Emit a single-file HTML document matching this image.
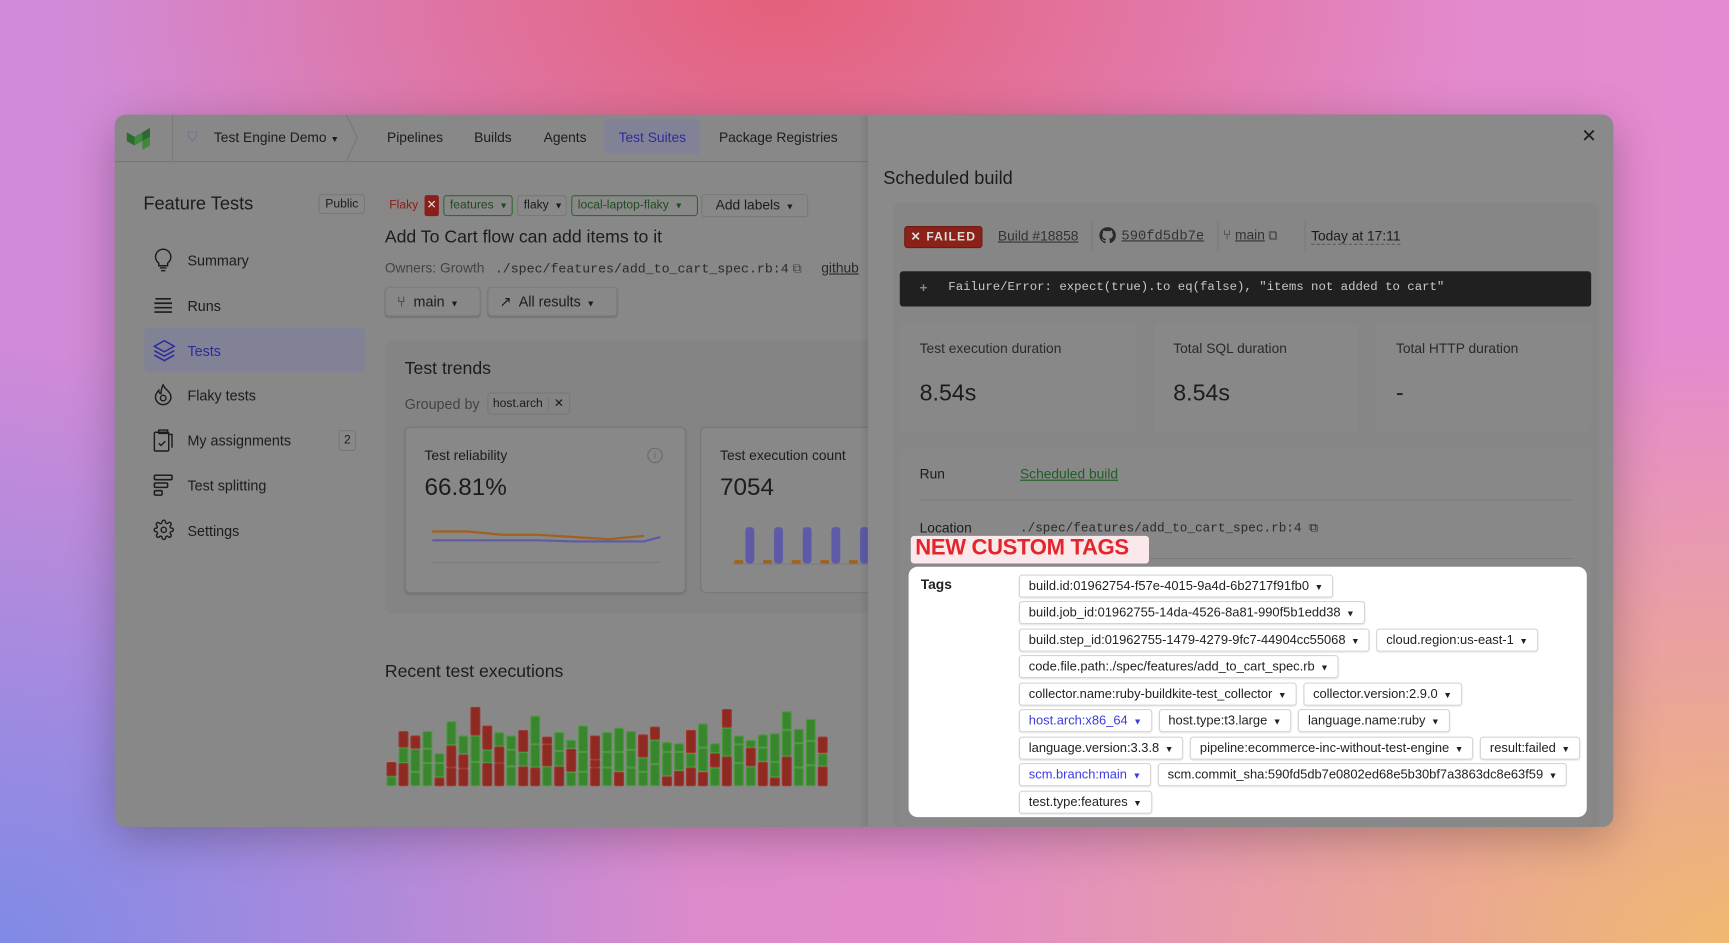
<!DOCTYPE html>
<html><head><meta charset="utf-8">
<style>
*{box-sizing:border-box;margin:0;padding:0}
html,body{width:1729px;height:943px;overflow:hidden}
body{font-family:"Liberation Sans",sans-serif;color:#1c1c1c;
background:
radial-gradient(ellipse 700px 420px at 780px 0px,#e4607a 0%,rgba(228,96,122,0) 100%),
radial-gradient(ellipse 800px 600px at 1729px 943px,#f0b870 0%,rgba(240,184,112,0) 100%),
radial-gradient(ellipse 700px 600px at 0px 943px,#7f8ae6 0%,rgba(127,138,230,0) 100%),
linear-gradient(90deg,#d08ad8 0%,#e08ac8 50%,#e48ad0 100%);}
#s{position:absolute;left:0;top:0;width:1568px;height:855px;transform:scale(1.10268);transform-origin:0 0}
.a{position:absolute;white-space:nowrap}
#win{position:absolute;left:104px;top:104px;width:1359px;height:646px;border-radius:10px;background:#888;overflow:hidden;box-shadow:0 10px 40px rgba(0,0,0,.25)}
.nav{font-size:12.5px;color:#1c1c1c}
.side{font-size:13px;color:#1c1c1c}
.chip{position:absolute;height:19px;border:1px solid #787878;border-radius:3px;font-size:11px;line-height:17px;padding:0 5px;white-space:nowrap}
.btn{position:absolute;height:27px;border:1px solid #7a7a7a;border-radius:4px;font-size:13px;line-height:25px;padding:0 10px;box-shadow:0 1px 1px rgba(0,0,0,.15);white-space:nowrap}
.tag{display:inline-block;height:21px;border:1px solid #d4d4d4;border-radius:3px;font-size:11.7px;line-height:19px;padding:0 8px;margin-right:6px;box-shadow:0 1px 1px rgba(0,0,0,.08);color:#222;white-space:nowrap}
.tag.b{color:#3b3be0}
.row{position:absolute;left:100px;white-space:nowrap;height:21px}
.car{font-size:8px;margin-left:5px}
</style></head><body>
<div id="s">
<div id="win">
 <div style="position:absolute;left:0;top:42px;width:683px;height:1px;background:#777"></div>
 <svg class="a" style="left:10px;top:12px" width="28" height="20" viewBox="0 0 28 20"><path d="M1 4 L8 8 L8 16 L1 12Z" fill="#2e6a30"/><path d="M8 8 L15 4 L15 12 L8 16Z" fill="#3d8a3f"/><path d="M15 4 L22 0 L22 8 L15 12Z" fill="#2e6a30"/><path d="M15 12 L22 8 L22 16 L15 20Z" fill="#3d8a3f"/></svg>
 <div class="a" style="left:52px;top:0;width:1px;height:42px;background:#7a7a7a"></div>
 <div class="a nav" style="left:66px;top:13px;color:#6a6a90;font-size:12px">⛉</div>
 <div class="a nav" style="left:90px;top:14px">Test Engine Demo <span style="font-size:8px">▼</span></div>
 <svg class="a" style="left:208px;top:0" width="14" height="42"><path d="M2 0 L12 21 L2 42" stroke="#777" fill="none"/></svg>
 <div class="a nav" style="left:247px;top:14px">Pipelines</div>
 <div class="a nav" style="left:326px;top:14px">Builds</div>
 <div class="a nav" style="left:389px;top:14px">Agents</div>
 <div class="a" style="left:444px;top:4px;width:87px;height:32px;background:#828296;border-radius:4px"></div>
 <div class="a nav" style="left:457px;top:14px;color:#2c2c9a">Test Suites</div>
 <div class="a nav" style="left:548px;top:14px">Package Registries</div>

 <div class="a" style="left:26px;top:72px;font-size:16.5px">Feature Tests</div>
 <div class="a" style="left:185px;top:72px;height:18px;border:1px solid #777;border-radius:3px;font-size:11px;line-height:16px;padding:0 5px">Public</div>
 <svg class="a" style="left:35px;top:121px" width="18" height="22" viewBox="0 0 18 22" fill="none" stroke="#1c1c1c" stroke-width="1.3"><path d="M9 1a7 7 0 0 0-4 12.7V16h8v-2.3A7 7 0 0 0 9 1z"/><path d="M6 18h6M7 20.5h4"/></svg>
 <div class="a side" style="left:66px;top:125px">Summary</div>
 <svg class="a" style="left:35px;top:165px" width="18" height="16" fill="none" stroke="#1c1c1c" stroke-width="1.5"><path d="M2 2h14M1 6h16M1 10h16M1 14h16"/></svg>
 <div class="a side" style="left:66px;top:166px">Runs</div>
 <div class="a" style="left:27px;top:193px;width:200px;height:41px;background:#828296;border-radius:4px"></div>
 <svg class="a" style="left:35px;top:204px" width="20" height="20" viewBox="0 0 20 20" fill="none" stroke="#2c2c9a" stroke-width="1.4"><path d="M10 1 L19 6 L10 11 L1 6Z"/><path d="M1 10 L10 15 L19 10"/><path d="M1 14 L10 19 L19 14"/></svg>
 <div class="a side" style="left:66px;top:207px;color:#2c2c9a">Tests</div>
 <svg class="a" style="left:35px;top:244px" width="18" height="20" fill="none" stroke="#1c1c1c" stroke-width="1.3"><path d="M9 1c1 4 7 6 7 11a7 7 0 0 1-14 0c0-3 2-5 3-6 0 2 1 3 2 3 0-3 1-6 2-8z"/><circle cx="9" cy="13" r="2.5"/></svg>
 <div class="a side" style="left:66px;top:247px">Flaky tests</div>
 <svg class="a" style="left:35px;top:284px" width="18" height="22" fill="none" stroke="#1c1c1c" stroke-width="1.3"><rect x="1" y="4" width="13" height="17" rx="1"/><path d="M5 2h8v3H5zM14 6h3v12"/><path d="M5 14l2 2 4-4"/></svg>
 <div class="a side" style="left:66px;top:288px">My assignments</div>
 <div class="a" style="left:203px;top:286px;width:16px;height:19px;border:1px solid #777;border-radius:3px;font-size:11px;text-align:center;line-height:17px">2</div>
 <svg class="a" style="left:35px;top:326px" width="18" height="20" fill="none" stroke="#1c1c1c" stroke-width="1.4"><rect x="1" y="1" width="16" height="4" rx="1"/><rect x="1" y="8" width="12" height="4" rx="1"/><rect x="1" y="15" width="7" height="4" rx="1"/></svg>
 <div class="a side" style="left:66px;top:329px">Test splitting</div>
 <svg class="a" style="left:35px;top:367px" width="19" height="19" viewBox="0 0 24 24" fill="none" stroke="#1c1c1c" stroke-width="1.6"><circle cx="12" cy="12" r="3"/><path d="M19.4 15a1.6 1.6 0 0 0 .3 1.8l.1.1a2 2 0 1 1-2.8 2.8l-.1-.1a1.6 1.6 0 0 0-1.8-.3 1.6 1.6 0 0 0-1 1.5V21a2 2 0 1 1-4 0v-.1a1.6 1.6 0 0 0-1-1.5 1.6 1.6 0 0 0-1.8.3l-.1.1a2 2 0 1 1-2.8-2.8l.1-.1a1.6 1.6 0 0 0 .3-1.8 1.6 1.6 0 0 0-1.5-1H3a2 2 0 1 1 0-4h.1a1.6 1.6 0 0 0 1.5-1 1.6 1.6 0 0 0-.3-1.8l-.1-.1a2 2 0 1 1 2.8-2.8l.1.1a1.6 1.6 0 0 0 1.8.3H9a1.6 1.6 0 0 0 1-1.5V3a2 2 0 1 1 4 0v.1a1.6 1.6 0 0 0 1 1.5 1.6 1.6 0 0 0 1.8-.3l.1-.1a2 2 0 1 1 2.8 2.8l-.1.1a1.6 1.6 0 0 0-.3 1.8V9a1.6 1.6 0 0 0 1.5 1H21a2 2 0 1 1 0 4h-.1a1.6 1.6 0 0 0-1.5 1z"/></svg>
 <div class="a side" style="left:66px;top:370px">Settings</div>

 <div class="chip" style="left:244px;top:73px;border-color:transparent;background:#8a8686;color:#8a1f1a;padding:0 4px">Flaky</div>
 <div class="a" style="left:281px;top:73px;width:13px;height:19px;background:#8a1f1a;color:#ddd;font-size:11px;text-align:center;line-height:19px;border-radius:2px">✕</div>
 <div class="chip" style="left:298px;top:73px;width:63px;border-color:#2e6a30;color:#1d4d20">features<span class="car">▼</span></div>
 <div class="chip" style="left:365px;top:73px;width:45px">flaky<span class="car">▼</span></div>
 <div class="chip" style="left:414px;top:73px;width:115px;border-color:#2e6a30;color:#1d4d20">local-laptop-flaky<span class="car">▼</span></div>
 <div class="chip" style="left:532px;top:72px;width:97px;height:21px;font-size:12.5px;line-height:19px;padding:0 12px;color:#1c1c1c">Add labels<span class="car">▼</span></div>
 <div class="a" style="left:245px;top:103px;font-size:16px">Add To Cart flow can add items to it</div>
 <div class="a" style="left:245px;top:132px;font-size:12.5px;color:#444">Owners: Growth <span style="font-family:'Liberation Mono',monospace;font-size:12px;margin-left:6px;color:#2a2a2a">./spec/features/add_to_cart_spec.rb:4</span> <span style="font-size:12px">⧉</span> <span style="margin-left:14px;text-decoration:underline;color:#2a2a2a">github</span></div>
 <div class="btn" style="left:245px;top:156px;width:87px">⑂&nbsp; main<span class="car">▼</span></div>
 <div class="btn" style="left:338px;top:156px;width:118px">↗&nbsp; All results<span class="car">▼</span></div>

 <div class="a" style="left:245px;top:205px;width:460px;height:247px;background:#848484;border-radius:6px"></div>
 <div class="a" style="left:263px;top:222px;font-size:16px">Test trends</div>
 <div class="a" style="left:263px;top:255px;font-size:13px;color:#444">Grouped by</div>
 <div class="a" style="left:338px;top:252px;height:20px;border:1px solid #777;border-radius:3px;font-size:11px;line-height:18px;padding:0 4px">host.arch <span style="border-left:1px solid #777;padding-left:4px;margin-left:2px">✕</span></div>
 <div class="a" style="left:263px;top:283px;width:255px;height:151px;border:1px solid #777;border-radius:5px;background:#888;box-shadow:0 1px 2px rgba(0,0,0,.15)"></div>
 <div class="a" style="left:281px;top:302px;font-size:12.5px">Test reliability</div>
 <div class="a" style="left:483px;top:302px;width:14px;height:14px;border:1px solid #6a6a6a;border-radius:50%;font-size:9px;text-align:center;line-height:12px;color:#6a6a6a">i</div>
 <div class="a" style="left:281px;top:325px;font-size:22px">66.81%</div>
 <svg class="a" style="left:285px;top:372px" width="210" height="40"><polyline points="3,6 35,6 67,9 99,9 131,11 163,13 195,10" stroke="#a0621a" stroke-width="2" fill="none"/><polyline points="3,14 35,14 67,14 99,14 131,15 163,15 195,15 210,11" stroke="#5e5aa8" stroke-width="2" fill="none"/><line x1="3" y1="34" x2="210" y2="34" stroke="#7b7b7b"/></svg>
 <div class="a" style="left:531px;top:283px;width:200px;height:151px;border:1px solid #777;border-radius:5px;background:#888"></div>
 <div class="a" style="left:549px;top:302px;font-size:12.5px">Test execution count</div>
 <div class="a" style="left:549px;top:325px;font-size:22px">7054</div>
 <svg class="a" style="left:560px;top:370px" width="130" height="40"><g fill="#5e5aa8"><rect x="12" y="4" width="8" height="33" rx="3"/><rect x="38" y="4" width="8" height="33" rx="3"/><rect x="64" y="4" width="8" height="33" rx="3"/><rect x="90" y="4" width="8" height="33" rx="3"/><rect x="116" y="4" width="8" height="33" rx="3"/></g><g fill="#a0621a"><rect x="2" y="34" width="8" height="3"/><rect x="28" y="34" width="8" height="3"/><rect x="54" y="34" width="8" height="3"/><rect x="80" y="34" width="8" height="3"/><rect x="106" y="34" width="8" height="3"/></g><line x1="0" y1="37.5" x2="130" y2="37.5" stroke="#7b7b7b"/></svg>

 <div class="a" style="left:245px;top:497px;font-size:16px">Recent test executions</div>
 <svg id="bars" class="a" style="left:246px;top:530px" width="410" height="80"></svg>

 <div class="a" style="left:683px;top:0;width:676px;height:646px;background:#8a8a8a;box-shadow:-2px 0 6px rgba(0,0,0,.12)"></div>
 <div class="a" style="left:1330px;top:10px;font-size:17px">✕</div>
 <div class="a" style="left:697px;top:49px;font-size:16.5px">Scheduled build</div>
 <div class="a" style="left:706px;top:80px;width:640px;height:566px;background:#868686;border-radius:6px"></div>
 <div class="a" style="left:716px;top:101px;width:71px;height:20px;background:#8a2219;border:1px solid #6e1a12;border-radius:3px;color:#ddd;font-size:11px;font-weight:bold;letter-spacing:1px;line-height:18px;text-align:center">✕ FAILED</div>
 <div class="a" style="left:801px;top:103px;font-size:12.5px;text-decoration:underline;color:#333">Build #18858</div>
 <div class="a" style="left:886px;top:97px;width:1px;height:26px;background:#7a7a7a"></div>
 <svg class="a" style="left:893px;top:102px" width="15" height="15" viewBox="0 0 16 16"><path fill="#2a2a2a" d="M8 0C3.6 0 0 3.6 0 8c0 3.5 2.3 6.5 5.5 7.6.4.1.5-.2.5-.4v-1.5c-2.2.5-2.7-1-2.7-1-.4-.9-.9-1.2-.9-1.2-.7-.5.1-.5.1-.5.8.1 1.2.8 1.2.8.7 1.3 1.9.9 2.3.7.1-.5.3-.9.5-1.1-1.8-.2-3.6-.9-3.6-4 0-.9.3-1.6.8-2.1-.1-.2-.4-1 .1-2.1 0 0 .7-.2 2.2.8.6-.2 1.3-.3 2-.3s1.4.1 2 .3c1.5-1 2.2-.8 2.2-.8.4 1.1.2 1.9.1 2.1.5.6.8 1.3.8 2.1 0 3.1-1.9 3.700-3.6 3.9.3.3.5.8.5 1.5v2.2c0 .2.1.5.6.4C13.7 14.5 16 11.5 16 8c0-4.4-3.6-8-8-8z"/></svg>
 <div class="a" style="left:913px;top:103px;font-size:12.5px;font-family:'Liberation Mono',monospace;text-decoration:underline;color:#333">590fd5db7e</div>
 <div class="a" style="left:1000px;top:97px;width:1px;height:26px;background:#7a7a7a"></div>
 <div class="a" style="left:1005px;top:102px;font-size:12.5px;color:#333">⑂ <span style="text-decoration:underline">main</span> ⧉</div>
 <div class="a" style="left:1079px;top:97px;width:1px;height:26px;background:#7a7a7a"></div>
 <div class="a" style="left:1085px;top:103px;font-size:12.5px;border-bottom:1px dashed #555">Today at 17:11</div>
 <div class="a" style="left:712px;top:142px;width:627px;height:32px;background:#202020;border-radius:3px"></div>
 <div class="a" style="left:730px;top:150px;font-size:12px;color:#888;font-weight:bold">+</div>
 <div class="a" style="left:756px;top:151px;font-size:11.2px;font-family:'Liberation Mono',monospace;color:#c8c8c8">Failure/Error: expect(true).to eq(false), "items not added to cart"</div>
 <div class="a" style="left:712px;top:189px;width:215px;height:99px;background:#888;border-radius:4px"></div>
 <div class="a" style="left:942px;top:189px;width:186px;height:99px;background:#888;border-radius:4px"></div>
 <div class="a" style="left:1144px;top:189px;width:195px;height:99px;background:#888;border-radius:4px"></div>
 <div class="a" style="left:730px;top:205px;font-size:12.5px;color:#2a2a2a">Test execution duration</div>
 <div class="a" style="left:960px;top:205px;font-size:12.5px;color:#2a2a2a">Total SQL duration</div>
 <div class="a" style="left:1162px;top:205px;font-size:12.5px;color:#2a2a2a">Total HTTP duration</div>
 <div class="a" style="left:730px;top:241px;font-size:21px">8.54s</div>
 <div class="a" style="left:960px;top:241px;font-size:21px">8.54s</div>
 <div class="a" style="left:1162px;top:241px;font-size:21px">-</div>
 <div class="a" style="left:712px;top:303px;width:627px;height:343px;background:#888;border-radius:4px"></div>
 <div class="a" style="left:730px;top:319px;font-size:12.5px">Run</div>
 <div class="a" style="left:821px;top:319px;font-size:12.5px;color:#1e5e22;text-decoration:underline">Scheduled build</div>
 <div class="a" style="left:730px;top:349px;width:592px;height:1px;background:#7a7a7a"></div>
 <div class="a" style="left:730px;top:368px;font-size:12.5px">Location</div>
 <div class="a" style="left:821px;top:369px;font-size:11.5px;font-family:'Liberation Mono',monospace;color:#2a2a2a">./spec/features/add_to_cart_spec.rb:4 ⧉</div>
 <div class="a" style="left:730px;top:402px;width:592px;height:1px;background:#7a7a7a"></div>

 <div class="a" style="left:722px;top:382px;width:216px;height:25px;background:#fbe8ea;border-radius:3px"></div>
 <div class="a" style="left:726px;top:382px;font-size:20px;color:#e3262c;font-weight:bold;letter-spacing:-.3px">NEW CUSTOM TAGS</div>
 <div class="a" style="left:720px;top:410px;width:615px;height:227px;background:#fff;border-radius:8px">
  <div class="a" style="left:11px;top:9px;font-size:12.5px;font-weight:bold;color:#222">Tags</div>
  <div class="row" style="top:7px"><span class="tag">build.id:01962754-f57e-4015-9a4d-6b2717f91fb0<span class="car">▼</span></span></div>
  <div class="row" style="top:31px"><span class="tag">build.job_id:01962755-14da-4526-8a81-990f5b1edd38<span class="car">▼</span></span></div>
  <div class="row" style="top:56px"><span class="tag">build.step_id:01962755-1479-4279-9fc7-44904cc55068<span class="car">▼</span></span><span class="tag">cloud.region:us-east-1<span class="car">▼</span></span></div>
  <div class="row" style="top:80px"><span class="tag">code.file.path:./spec/features/add_to_cart_spec.rb<span class="car">▼</span></span></div>
  <div class="row" style="top:105px"><span class="tag">collector.name:ruby-buildkite-test_collector<span class="car">▼</span></span><span class="tag">collector.version:2.9.0<span class="car">▼</span></span></div>
  <div class="row" style="top:129px"><span class="tag b">host.arch:x86_64<span class="car">▼</span></span><span class="tag">host.type:t3.large<span class="car">▼</span></span><span class="tag">language.name:ruby<span class="car">▼</span></span></div>
  <div class="row" style="top:154px"><span class="tag">language.version:3.3.8<span class="car">▼</span></span><span class="tag">pipeline:ecommerce-inc-without-test-engine<span class="car">▼</span></span><span class="tag">result:failed<span class="car">▼</span></span></div>
  <div class="row" style="top:178px"><span class="tag b">scm.branch:main<span class="car">▼</span></span><span class="tag">scm.commit_sha:590fd5db7e0802ed68e5b30bf7a3863dc8e63f59<span class="car">▼</span></span></div>
  <div class="row" style="top:203px"><span class="tag">test.type:features<span class="car">▼</span></span></div>
 </div>
</div>
</div>
<script>
var cols=[[9,'g',13,'r'],[21,'r',14,'g',15,'r'],[13,'g',21,'g',12,'r'],[21,'g',13,'g',16,'g'],[8,'r',13,'g',9,'g'],[17,'r',20,'r',22,'g'],[16,'r',13,'r',17,'g'],[22,'g',24,'g',26,'r'],[21,'r',12,'g',22,'r'],[21,'r',15,'r',13,'g'],[18,'g',15,'g',13,'g'],[18,'r',13,'g',20,'r'],[17,'r',21,'g',26,'g'],[18,'g',20,'r',7,'r'],[18,'r',14,'g',17,'g'],[13,'g',21,'r',8,'g'],[13,'g',18,'g',24,'g'],[17,'r',7,'r',22,'r'],[17,'g',14,'g',18,'g'],[13,'r',18,'g',22,'g'],[17,'g',16,'g',17,'g'],[13,'g',13,'g',21,'r'],[20,'g',22,'g',12,'r'],[9,'r',22,'g',9,'g'],[14,'r',17,'g',8,'g'],[17,'r',13,'g',21,'r'],[13,'r',22,'g',22,'g'],[17,'g',13,'r',9,'g'],[27,'r',26,'g',17,'r'],[21,'g',17,'g',8,'g'],[18,'g',17,'r',7,'g'],[22,'r',13,'g',12,'g'],[8,'r',14,'g',26,'g'],[27,'r',24,'g',17,'g'],[17,'g',22,'g',13,'g'],[19,'g',22,'g',20,'g'],[18,'r',12,'g',15,'r']];
var s='',w=8,st=402/cols.length;
cols.forEach(function(c,i){var y=79;for(var k=0;k<c.length;k+=2){var h=c[k];y-=h;var f=c[k+1]=='g'?'#3a862e':'#8e2a22',b=c[k+1]=='g'?'#4c9a3e':'#a0352c';s+='<rect x="'+(i*st+1).toFixed(1)+'" y="'+(y+.5)+'" width="'+w+'" height="'+(h-1)+'" fill="'+f+'" stroke="'+b+'" stroke-width="1" rx="1"/>';}});
document.getElementById('bars').innerHTML=s;
</script>
</body></html>
